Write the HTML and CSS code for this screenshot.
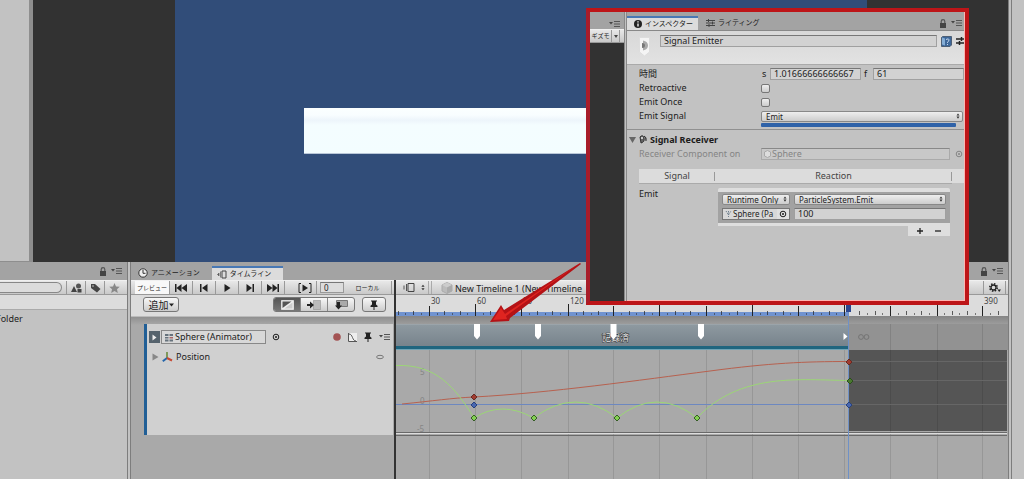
FILE: index.html
```html
<!DOCTYPE html>
<html lang="ja">
<head>
<meta charset="utf-8">
<meta name="viewport" content="width=device-width, initial-scale=1">
<title>Timeline – Signal Emitter</title>
<link rel="stylesheet" href="styles.css">
</head>
<body>
<svg class="defs" aria-hidden="true">
  <defs>
    <symbol id="menu" viewBox="0 0 12 8"><path d="M0 2h4L2 4.500z" fill="#444"/><path d="M5 1.500h6M5 4h6M5 6.500h6" stroke="#555" stroke-width="1"/></symbol>
    <symbol id="lock" viewBox="0 0 8 9"><path d="M1 4h6v5H1z" fill="#444"/><path d="M2.200 4V2.500a1.800 1.800 0 0 1 3.600 0V4" fill="none" stroke="#555" stroke-width="1.200"/></symbol>
    <symbol id="arrows" viewBox="0 0 5 8"><path d="M.5 3.200 2.500.5l2 2.700zM.5 4.800l2 2.700 2-2.700z" fill="#333"/></symbol>
    <symbol id="target" viewBox="0 0 8 8"><circle cx="4" cy="4" r="2.800" fill="none" stroke="currentColor"/><circle cx="4" cy="4" r="1" fill="currentColor"/></symbol>
    <symbol id="pin" viewBox="0 0 8 10"><path d="M1 .5h6v1H6v3l1.500 1.200V7h-3v3h-1V7h-3V5.700L2 4.500v-3H1z" fill="#222"/></symbol>
    <symbol id="diamond" viewBox="-4 -4 8 8"><path d="M-3 0 0-3 3 0 0 3z" fill="inherit" stroke="inherit"/></symbol>
  </defs>
</svg>

<div class="editor">
  <div class="main">
    <div class="top">
      <aside class="hierarchy"></aside>
      <section class="game"><div class="scene"><div class="ground"></div></div></section>
    </div>

    <div class="bottom">
      <aside class="project">
        <div class="tabs tabs-end">
          <svg class="i-lock"><use href="#lock"/></svg>
          <svg class="i-menu"><use href="#menu"/></svg>
        </div>
        <div class="toolbar project-tools">
          <input class="search" type="search" aria-label="Search">
          <button class="tool" aria-label="Filter by type"><svg width="11" height="10" viewBox="0 0 11 10"><circle cx="7.500" cy="3" r="2.500" fill="#555"/><path d="M0 9 3 3l3 6zM6.500 6h4v3.500h-4z" fill="#444"/></svg></button>
          <button class="tool" aria-label="Filter by label"><svg width="11" height="10" viewBox="0 0 11 10"><path d="M1 1h4l5.500 5L7 9.500 1 5z" fill="#444"/><circle cx="3" cy="3" r=".8" fill="#ccc"/></svg></button>
          <button class="tool" aria-label="Favorites"><svg width="11" height="10" viewBox="0 0 11 10"><path d="m5.500 0 1.500 3.400 3.700.4L8 6.300l.8 3.700-3.300-1.900L2.200 10 3 6.300.3 3.800l3.700-.4z" fill="#888"/></svg></button>
        </div>
        <div class="crumbs"></div>
        <div class="files"><span class="file">Folder</span></div>
      </aside>

      <section class="timeline">
        <div class="tabs">
          <button class="tab tab-anim"><svg width="10" height="10" viewBox="0 0 10 10"><circle cx="5" cy="5" r="4.200" fill="#eee" stroke="#333"/><path d="M5 2v3.300h2.500" fill="none" stroke="#333"/></svg>アニメーション</button>
          <button class="tab tab-on"><svg width="10" height="9" viewBox="0 0 10 9"><path d="M5 1h4v7H5z" fill="none" stroke="#444"/><path d="M3.500 1.500v6M.5 4.500 2 3v3z" stroke="#666" fill="#555" stroke-width=".8"/></svg>タイムライン</button>
          <span class="spring"></span>
          <svg class="i-lock"><use href="#lock"/></svg>
          <svg class="i-menu"><use href="#menu"/></svg>
        </div>
        <div class="split">
          <div class="tracks">
            <div class="toolbar transport">
              <button class="tool preview">プレビュー</button>
              <button class="tool" aria-label="Start"><svg width="12" height="8" viewBox="0 0 12 8"><path d="M0 0h1.500v8H0zM6.500 0v8L1.500 4zM12 0v8L6.500 4z" fill="#222"/></svg></button>
              <button class="tool" aria-label="Previous frame"><svg width="8" height="8" viewBox="0 0 8 8"><path d="M0 0h1.500v8H0zM7.500 0v8L2 4z" fill="#222"/></svg></button>
              <button class="tool" aria-label="Play"><svg width="7" height="8" viewBox="0 0 7 8"><path d="M.5 0 6.500 4 .5 8z" fill="#222"/></svg></button>
              <button class="tool" aria-label="Next frame"><svg width="8" height="8" viewBox="0 0 8 8"><path d="M6.500 0H8v8H6.500zM.5 0v8L6 4z" fill="#222"/></svg></button>
              <button class="tool" aria-label="End"><svg width="12" height="8" viewBox="0 0 12 8"><path d="M10.500 0H12v8h-1.500zM5.500 0v8l5-4zM0 0v8l5.500-4z" fill="#222"/></svg></button>
              <button class="tool range" aria-label="Play range"><svg width="14" height="10" viewBox="0 0 14 10"><path d="M3 .5H1v9h2M11 .5h2v9h-2" fill="none" stroke="#222"/><path d="M4.500 1.500 10 5 4.500 8.500z" fill="#222"/></svg></button>
              <input class="frame" value="0" aria-label="Frame">
              <button class="tool local">ローカル</button>
            </div>
            <div class="modes">
              <button class="btn add">追加<svg width="5" height="4" viewBox="0 0 5 4"><path d="M0 .5h5L2.500 3.500z" fill="#222"/></svg></button>
              <span class="spring"></span>
              <div class="segments">
                <button class="seg seg-on" aria-label="Mix mode"><svg width="13" height="10" viewBox="0 0 13 10"><path d="M.5.500h12v9H.5z" fill="#eee" stroke="#ddd"/><path d="M1.500 8V1.500h9z" fill="#555"/><path d="M11.500 2.500v6h-8z" fill="#ccc"/></svg></button>
                <button class="seg" aria-label="Ripple mode"><svg width="14" height="10" viewBox="0 0 14 10"><path d="M6.500.500h7v9h-7z" fill="#bbb" stroke="#888" stroke-dasharray="1 1"/><path d="M0 4h3V1.500L7 5 3 8.500V6H0z" fill="#222"/></svg></button>
                <button class="seg" aria-label="Replace mode"><svg width="14" height="10" viewBox="0 0 14 10"><path d="M2.500.500h11v6h-11z" fill="#aaa" stroke="#777"/><path d="M3 2h3v3.500h2L4.500 9.500 1 5.500h2z" fill="#222"/></svg></button>
              </div>
              <button class="btn pin" aria-label="Show markers"><svg width="8" height="10"><use href="#pin"/></svg></button>
            </div>
            <div class="track-list">
              <article class="track">
                <div class="track-row">
                  <button class="expand" aria-label="Expand"><svg width="5" height="7" viewBox="0 0 5 7"><path d="M.5.500 4.500 3.500l-4 3z" fill="#eee"/></svg></button>
                  <div class="binding">
                    <svg width="8" height="9" viewBox="0 0 8 9"><path d="M0 1h3.500v2H0zM4.500 1H8v2H4.500zM0 4h3.500v1.500H0zM0 6.500h3.500v2H0zM4.500 6.500H8v2H4.500z" fill="#66727c"/><path d="M4.500 4H8v1.500H4.500z" fill="#a66"/></svg>
                    <input value="Sphere (Animator)" aria-label="Binding">
                  </div>
                  <button class="plain" aria-label="Pick object"><svg width="8" height="8"><use href="#target"/></svg></button>
                  <span class="spring"></span>
                  <button class="plain" aria-label="Record"><svg width="8" height="8" viewBox="0 0 8 8"><circle cx="4" cy="4" r="3.800" fill="#a35353"/></svg></button>
                  <button class="plain" aria-label="Curves"><svg width="9" height="9" viewBox="0 0 9 9"><path d="M0 0h9v9H0z" fill="#eee"/><path d="M.5 0v8.500H9M1 1c4 0 3 7 7 7" fill="none" stroke="#555"/></svg></button>
                  <button class="plain" aria-label="Markers"><svg width="8" height="10"><use href="#pin"/></svg></button>
                  <button class="plain" aria-label="Track menu"><svg width="12" height="8"><use href="#menu"/></svg></button>
                </div>
                <div class="prop-row">
                  <svg width="7" height="8" viewBox="0 0 7 8"><path d="M.5.500 6.500 4l-6 3.500z" fill="#888"/></svg>
                  <svg width="11" height="10" viewBox="0 0 11 10"><path d="M5 0v6" stroke="#698a3c" stroke-width="1.600"/><path d="M5 6 .8 9.200" stroke="#2767ab" stroke-width="2"/><path d="m5 6 5 2.500" stroke="#c64832" stroke-width="2"/></svg>
                  <span>Position</span>
                  <span class="spring"></span>
                  <svg width="8" height="6" viewBox="0 0 8 6"><ellipse cx="4" cy="3" rx="3.400" ry="1.700" fill="none" stroke="#777"/></svg>
                </div>
              </article>
            </div>
          </div>

          <div class="clips">
            <div class="toolbar asset-bar">
              <button class="tool sequence" aria-label="Timeline selector"><svg width="12" height="9" viewBox="0 0 12 9"><path d="M5 .5h6v8H5z" fill="none" stroke="#444"/><path d="M3.500 1v7M1 2.500v4" stroke="#555"/></svg><svg width="4" height="7"><use href="#arrows"/></svg></button>
              <svg class="cube" width="12" height="12" viewBox="0 0 12 12"><path d="m6 .5 5 2.500v6l-5 2.500L1 9V3z" fill="#bbb" stroke="#aaa"/><path d="m1 3 5 2.500L11 3 6 .5z" fill="#ccc"/><path d="M6 5.500v6L11 9V3z" fill="#aaa"/></svg>
              <span class="asset-name">New Timeline 1 (New Timeline</span>
              <span class="spring"></span>
              <button class="tool gear" aria-label="Settings"><svg width="12" height="10" viewBox="0 0 12 10"><circle cx="4.500" cy="4.500" r="3.700" fill="none" stroke="#222" stroke-width="1.600" stroke-dasharray="1.500 1.400"/><circle cx="4.500" cy="4.500" r="2.500" fill="none" stroke="#222" stroke-width="1.300"/><path d="M8.500 6.500H12L10.200 9z" fill="#222"/></svg></button>
            </div>
            <svg class="canvas" role="img" aria-label="Timeline curves">
              <defs>
                <linearGradient id="clip" x2="0" y2="1"><stop stop-color="#8f9aa1"/><stop offset="1" stop-color="#75818a"/></linearGradient>
                <linearGradient id="shade" x2="0" y2="1"><stop stop-color="#858585"/><stop offset="1" stop-color="#9c9c9c"/></linearGradient>
                <g id="marker"><path d="M-3 0h6v12L0 15.500-3 12z" fill="#fff"/></g>
              </defs>
              <g transform="translate(-396 -295)">
                <rect x="396" y="295" width="100%" height="21" fill="#dcdcdc"/>
                <rect x="396" y="312" width="452" height="4" fill="#7093d0"/>
                <path d="M429.500 306v10M475.500 304v12M521.500 306v10M568.500 304v12M613.500 306v10M659.500 304v12M706.500 306v10M752.500 304v12M798.500 306v10M844.500 304v12M890.500 306v10M937.500 304v12M982.500 306v10" stroke="#222"/>
                <path d="M398.500 311v4M413.500 311v4M444.500 311v4M460.500 311v4M490.500 311v4M506.500 311v4M537.500 311v4M552.500 311v4M583.500 311v4M598.500 311v4M629.500 311v4M644.500 311v4M675.500 311v4M690.500 311v4M721.500 311v4M737.500 311v4M767.500 311v4M783.500 311v4M813.500 311v4M829.500 311v4M859.500 311v4M875.500 311v4M906.500 311v4M921.500 311v4M952.500 311v4M967.500 311v4M998.500 311v4" stroke="#222" opacity=".7"/>
                <path d="M405.500 313v2M421.500 313v2M437.500 313v2M452.500 313v2M467.500 313v2M483.500 313v2M498.500 313v2M514.500 313v2M529.500 313v2M545.500 313v2M560.500 313v2M576.500 313v2M591.500 313v2M606.500 313v2M621.500 313v2M636.500 313v2M652.500 313v2M667.500 313v2M683.500 313v2M698.500 313v2M714.500 313v2M729.500 313v2M744.500 313v2M760.500 313v2M775.500 313v2M790.500 313v2M806.500 313v2M821.500 313v2M836.500 313v2M867.500 313v2M882.500 313v2M898.500 313v2M914.500 313v2M929.500 313v2M944.500 313v2M959.500 313v2M975.500 313v2M990.500 313v2" stroke="#333" opacity=".6"/>
                <g class="ruler-text"><text x="431" y="304">30</text><text x="477" y="304">60</text><text x="523" y="304">90</text><text x="570" y="304">120</text><text x="984" y="304">390</text></g>
                <rect x="396" y="316" width="100%" height="8" fill="url(#shade)"/>
                <rect x="396" y="324" width="100%" height="26" fill="#929292"/>
                <rect x="396" y="324" width="452" height="24" fill="url(#clip)"/>
                <path d="M396 324.500h452" stroke="#9ba4aa"/>
                <rect x="396" y="346" width="452" height="3" fill="#1f657f"/>
                <rect x="396" y="350" width="100%" height="81" fill="#a9a9a9"/>
                <rect x="849" y="350" width="158" height="81" fill="#555"/>
                <rect x="396" y="431" width="100%" height="500" fill="#a9a9a9"/>
                <path d="M429.500 350v2000M475.500 350v2000M521.500 350v2000M568.500 350v2000M613.500 350v2000M659.500 350v2000M706.500 350v2000M752.500 350v2000M798.500 350v2000M844.500 350v2000M890.500 324v2000M937.500 324v2000M982.500 324v2000" stroke="#000" opacity=".1"/>
                <path d="M849 361.500h158M849 380.500h158M849 404.500h158" stroke="#666"/>
                <path d="M396 349.500h452" stroke="#6fa3b5"/>
                <path d="M396 433.500h611" stroke="#ddd"/>
                <path d="M396 432.500h611M396 435.500h611" stroke="#696969"/>
                <use href="#marker" x="477" y="324"/><use href="#marker" x="538" y="324"/><use href="#marker" x="701" y="324"/>
                <text class="clip-name" x="602" y="341">記録済</text>
                <use href="#marker" x="613.500" y="324"/>
                <path d="m843.500 333 4 3.500-4 3.500z" fill="#fff"/>
                <g fill="none" stroke="#747474"><circle cx="861" cy="337" r="2.400"/><circle cx="866.500" cy="337" r="2.400"/></g>
                <g class="axis-text"><text x="420" y="375">5</text><text x="420" y="404">0</text><text x="417" y="432">-5</text></g>
                <path d="M396 404.500h452" stroke="#6d88c0"/>
                <path d="M402 404C433 401 452 398 474 397C550 393 640 380 710 371C770 363 805 361.500 848 361.500" fill="none" stroke="#b7614f"/>
                <path d="M396 365.500C436 364 455 387 474 418Q502 400 533.500 418Q576 386 617 418Q657 386 697 418C740 372 800 380 849 380.500" fill="none" stroke="#9cd676"/>
                <path d="M848.500 306v2000" stroke="#6f91c6"/>
                <rect x="846" y="304" width="5" height="8" fill="#2c478f"/>
                <g fill="#a13c30" stroke="#672a23"><use href="#diamond" x="470" y="393" width="8" height="8"/><use href="#diamond" x="845" y="358" width="8" height="8"/></g>
                <g fill="#4a68b0" stroke="#27417e"><use href="#diamond" x="470" y="401" width="8" height="8"/><use href="#diamond" x="845" y="401" width="8" height="8"/></g>
                <g fill="#83d052" stroke="#355d24"><use href="#diamond" x="470" y="414" width="8" height="8"/><use href="#diamond" x="530" y="414" width="8" height="8"/><use href="#diamond" x="613" y="414" width="8" height="8"/><use href="#diamond" x="693" y="414" width="8" height="8"/></g>
                <g fill="#4a7a30" stroke="#2c4d1d"><use href="#diamond" x="846" y="377" width="8" height="8"/></g>
              </g>
            </svg>
          </div>
        </div>
      </section>
    </div>
  </div>
  <aside class="dock"></aside>

  <svg class="callout-arrow" width="96" height="64" viewBox="0 0 96 64" aria-hidden="true"><path d="M91 3 20 57l-1 3-19 1L11 44l3 5L90 2z" fill="#b41216"/><path d="M90 2 15 53l-4-6L3 59l14-1-1-3z" fill="#df2420"/></svg>

  <section class="callout">
    <div class="peek">
      <div class="tabs tabs-end"><svg class="i-menu"><use href="#menu"/></svg></div>
      <div class="toolbar peek-tools"><button class="tool gizmo">ギズモ</button><button class="tool gizmo-more" aria-label="Gizmo menu"><svg width="4" height="3" viewBox="0 0 4 3"><path d="M0 0h4L2 3z" fill="#444"/></svg></button></div>
      <div class="peek-view"></div>
    </div>
    <div class="inspector">
      <div class="tabs">
        <button class="tab tab-on"><svg width="8" height="8" viewBox="0 0 8 8"><circle cx="4" cy="4" r="4" fill="#222"/><path d="M4 1.200v1.300M4 3.500V6.500" stroke="#fff" stroke-width="1.300"/></svg>インスペクター</button>
        <button class="tab"><svg width="9" height="8" viewBox="0 0 9 8"><path d="M0 1.500h9M0 4h9M0 6.500h9M2.500 0v3M6.500 2.500v3M3 5v3" stroke="#444"/></svg>ライティング</button>
        <span class="spring"></span>
        <svg class="i-lock"><use href="#lock"/></svg>
        <svg class="i-menu"><use href="#menu"/></svg>
      </div>
      <header class="insp-head">
        <svg class="emitter" width="11" height="20" viewBox="0 0 11 20"><path d="M.5.500h10V15l-5 4-5-4z" fill="#f4f4f4" stroke="#ddd"/><path d="M4 3.500q5 1 5 5t-5 5z" fill="#aaa"/><path d="M3 6q3 0 3 2.500T3 11z" fill="#777"/></svg>
        <input class="field name" value="Signal Emitter" aria-label="Name">
        <button class="plain" aria-label="Help"><svg width="11" height="11" viewBox="0 0 11 11"><path d="M1.500.500h9v8.500l-1.500 1.500H.5V1.500z" fill="#3d6799" stroke="#4d5f75"/><path d="m1 1.500 3 1v7l-3-1z" fill="#84add6"/><path d="M5 3.500q3-1.500 3 .3T6.500 6v.8M6.500 8v1" fill="none" stroke="#c5d8f0"/></svg></button>
        <button class="plain" aria-label="Presets"><svg width="8" height="10" viewBox="0 0 8 10"><path d="M0 3h8M0 7h8M5.500 1v4M3.500 5v4" stroke="#222" stroke-width="1.500"/></svg></button>
      </header>
      <div class="props">
        <div class="prop time"><label for="sec">時間</label><span class="unit">s</span><input class="field" id="sec" value="1.01666666666667"><label class="unit" for="frm">f</label><input class="field" id="frm" value="61"></div>
        <div class="prop"><label for="retro">Retroactive</label><input type="checkbox" id="retro"></div>
        <div class="prop"><label for="once">Emit Once</label><input type="checkbox" id="once"></div>
        <div class="prop"><label for="sig">Emit Signal</label><div class="dropdown"><select id="sig"><option>Emit</option></select><svg width="4" height="6"><use href="#arrows"/></svg></div></div>
        <div class="signal-color"></div>
      </div>
      <div class="receiver">
        <h2><svg width="7" height="6" viewBox="0 0 7 6"><path d="M0 0h7L3.500 6z" fill="#666"/></svg><svg width="8" height="10" viewBox="0 0 8 10"><path d="M1 2q3-3 4 1t-3 5zM5 1q3 1 2 5" fill="#666" stroke="#333"/><circle cx="3" cy="3" r="1" fill="#eee"/></svg>Signal Receiver</h2>
        <div class="prop muted"><label for="comp">Receiver Component on</label><div class="object"><svg width="7" height="8" viewBox="0 0 7 8"><path d="m3.500.500 3 1.500v4l-3 1.500-3-1.500V2z" fill="#ddd" stroke="#aaa"/></svg><input id="comp" value="Sphere" disabled></div><svg width="8" height="8"><use href="#target"/></svg></div>
        <table class="reactions">
          <colgroup><col class="col-signal"><col><col class="col-end"></colgroup>
          <thead><tr><th>Signal</th><th>Reaction</th><td></td></tr></thead>
          <tbody><tr><td class="signal">Emit</td><td>
            <div class="event">
              <div class="event-grid">
                <div class="dropdown"><select aria-label="Call state"><option>Runtime Only</option></select><svg width="4" height="6"><use href="#arrows"/></svg></div>
                <div class="dropdown"><select aria-label="Function"><option>ParticleSystem.Emit</option></select><svg width="4" height="6"><use href="#arrows"/></svg></div>
                <div class="object listener"><svg width="7" height="8" viewBox="0 0 7 8"><path d="m1 1 2.500 4L6 1M3.500 1v6" fill="none" stroke="#6e7f8e" stroke-dasharray="1.500 1"/></svg><input value="Sphere (Pa" aria-label="Listener"><button aria-label="Pick listener"><svg width="8" height="8"><use href="#target"/></svg></button></div>
                <input class="field" value="100" aria-label="Argument">
              </div>
            </div>
            <div class="event-foot"><button aria-label="Add"><svg width="6" height="6" viewBox="0 0 6 6"><path d="M0 3h6M3 0v6" stroke="#222" stroke-width="1.300"/></svg></button><button aria-label="Remove"><svg width="6" height="6" viewBox="0 0 6 6"><path d="M0 3h6" stroke="#222" stroke-width="1.300"/></svg></button></div>
          </td><td></td></tr></tbody>
        </table>
      </div>
    </div>
  </section>
</div>
</body>
</html>
```
FILE: styles.css
```css
* { box-sizing: border-box; }
body { margin: 0; font: 9px/12px "Noto Sans", "Noto Sans CJK JP", sans-serif; color: #1c1c1c; background: #a3a3a3; }
button, input, select { font: inherit; color: inherit; margin: 0; padding: 0; border: 0; border-radius: 0; background: none; min-width: 0; appearance: none; outline: none; }
button { white-space: nowrap; }
svg { flex: none; display: block; }
.defs { position: absolute; width: 0; height: 0; }
.spring { flex: 1; }

.editor { position: relative; display: flex; min-height: 100vh; overflow: hidden; }
.main { flex: 1; min-width: 0; display: flex; flex-direction: column; }
.dock { width: 16px; background: #c2c2c2; border-left: 4px double #7d7d7d; }

.top { display: flex; height: 262px; }
.hierarchy { width: 33px; background: #c2c2c2; border-right: 4px solid #8e8e8e; border-bottom: 1px solid #8e8e8e; }
.game { flex: 1; padding: 0 141px 0 142px; background: #323232; }
.scene { height: 100%; padding: 108px 129px; background: #314d79; }
.ground { height: 46px; border-bottom: 1px solid #b9c7d8; background: linear-gradient(#fbffff 0, #f8fdff 16%, #edf5fb 27%, #f4fdff 38%, #f3fdff 100%); }

.bottom { flex: 1; display: flex; }
.tabs { display: flex; align-items: center; height: 18px; padding-right: 4px; background: #a3a3a3; }
.tabs-end { justify-content: flex-end; }
.tab { display: flex; align-items: center; gap: 3px; height: 14px; padding: 0 6px; margin-top: 4px; font-size: 7px; }
.tab-on { background: #dcdcdc; border-top: 2px solid #4878b4; padding: 0 12px 0 5px; }
.i-lock { width: 8px; height: 9px; margin-right: 4px; }
.i-menu { width: 12px; height: 8px; }
.toolbar { display: flex; height: 15px; border-top: 1px solid #f0f0f0; border-bottom: 1px solid #999; background: linear-gradient(#e8e8e8, #c9c9c9); }
.tool { display: flex; align-items: center; justify-content: center; width: 23px; border-right: 1px solid #999; }
.plain { display: flex; align-items: center; }
.field { height: 12px; padding: 0 3px; background: #d2d2d2; border: 1px solid #a0a0a0; border-top-color: #777; }

.project { width: 131px; display: flex; flex-direction: column; border-right: 4px double #7d7d7d; background: #c2c2c2; }
.project-tools { padding-right: 4px; }
.search { flex: 1; margin: 1px 4px 1px 0; border: 1px solid #888; border-left: 0; border-radius: 0 6px 6px 0; background: #dcdcdc; }
.project-tools .tool { border-right: 0; border-left: 1px solid #999; width: 19px; }
.crumbs { height: 15px; background: #dcdcdc; border-bottom: 1px solid #aaa; }
.files { padding-top: 3px; }
.file { margin-left: -4px; }

.timeline { flex: 1; min-width: 0; display: flex; flex-direction: column; background: #a9a9a9; }
.tab-anim { padding: 0 12px 0 7px; }
.split { flex: 1; display: flex; }
.tracks { width: 265px; border-right: 2px solid #333; display: flex; flex-direction: column; }
.transport { padding-left: 4px; }
.preview { width: 35px; background: #f8f8f8; font-size: 6px; }
.range { width: 32px; padding-left: 8px; }
.frame { width: 24px; height: 11px; margin: 1px 0 0 3px; padding: 0 3px; background: #dcdcdc; border: 1px solid #999; border-top-color: #777; font-size: 8px; }
.local { flex: 1; margin-right: 2px; font-size: 6px; }
.modes { display: flex; align-items: center; gap: 7px; height: 22px; padding: 0 8px 2px 12px; background: #dcdcdc; border-bottom: 1px solid #bbb; }
.btn, .segments { border: 1px solid #777; border-radius: 3px; background: linear-gradient(#f8f8f8, #ccc); height: 15px; }
.btn { display: flex; align-items: center; justify-content: center; }
.add { width: 36px; font-size: 10px; }
.pin { width: 24px; }
.segments { display: flex; width: 82px; overflow: hidden; }
.seg { flex: 1; display: flex; align-items: center; justify-content: center; border-left: 1px solid #888; }
.seg-on { background: linear-gradient(#555, #777); border-left: 0; }
.track-list { flex: 1; padding: 7px 1px 0 13px; background: linear-gradient(#909090, #a9a9a9 8px); }
.track { min-height: 111px; border-left: 3px solid #215f96; background: #d0d0d0; padding: 6px 2px 0 2px; }
.track-row { display: flex; align-items: center; gap: 6px; height: 14px; }
.track-row .plain + .plain { margin-left: 1px; }
.expand { display: flex; align-items: center; justify-content: center; width: 11px; height: 12px; background: #56636d; margin-right: -5px; }
.binding { display: flex; align-items: center; gap: 2px; width: 105px; height: 14px; padding-left: 3px; background: #d8d8d8; border: 1px solid #888; }
.binding input { flex: 1; }
.prop-row { display: flex; align-items: center; gap: 3px; height: 14px; margin-top: 6px; padding: 0 7px 0 3px; }

.clips { flex: 1; min-width: 0; display: flex; flex-direction: column; }
.asset-bar { align-items: stretch; padding-right: 2px; }
.sequence { width: 36px; gap: 6px; padding-left: 4px; border-right: 4px double #aaa; }
.cube { margin: 1px 2px 0 9px; align-self: center; }
.asset-name { line-height: 15px; white-space: nowrap; }
.gear { width: 23px; border-left: 1px solid #999; }
.canvas { flex: 1; width: 100%; overflow: hidden; }
.ruler-text { font-size: 8px; fill: #444; }
.axis-text { font-size: 8px; fill: #858585; }
.clip-name { font-size: 9px; fill: #e8e8e8; stroke: #333; stroke-width: 1px; paint-order: stroke; }

.callout-arrow { position: absolute; left: 490px; top: 261px; }
.callout { position: absolute; left: 586px; top: 8px; width: 383px; height: 297px; display: flex; border: 4px solid #bd1518; border-left-color: #a81d2a; background: #c2c2c2; box-shadow: inset -1px -1px #ffb4b0; overflow: hidden; }
.peek { width: 34px; display: flex; flex-direction: column; }
.peek .tabs { padding-right: 3px; height: 17px; padding-top: 6px; }
.peek-tools { height: 14px; }
.gizmo { width: 22px; font-size: 6px; }
.gizmo-more { width: 8px; }
.peek-view { flex: 1; background: #323232; }
.inspector { flex: 1; min-width: 0; border-left: 3px double #888; margin-right: 1px; }
.inspector .tabs { height: 19px; padding: 4px 1px 0 0; border-bottom: 1px solid #888; }
.inspector .tab { margin-top: 0; padding: 0 8px; }
.inspector .tab-on { padding: 0 5px 0 7px; }
.insp-head { display: flex; gap: 4px; align-items: flex-start; height: 34px; padding: 4px 0 0 12px; background: linear-gradient(#d8d8d8, #e2e2e2); border-bottom: 1px solid #aaa; }
.emitter { margin: 2px 6px 0 0; }
.name { flex: 1; }
.insp-head .plain { height: 12px; }
.props { padding: 2px 0 2px 12px; border-bottom: 1px solid #909090; }
.prop { display: grid; grid-template-columns: 122px 1fr; align-items: center; height: 14px; padding-right: 1px; }
.prop > * { min-width: 0; }
.prop.time { grid-template-columns: 122px 9px 91px 12px 1fr; padding-right: 0; }
.unit { padding-left: 1px; }
.time label.unit { padding-left: 3px; }
input[type="checkbox"] { width: 9px; height: 9px; border: 1px solid #777; border-radius: 2px; background: linear-gradient(#eee, #ccc); }
.dropdown { position: relative; display: flex; align-items: center; font-size: 8px; }
.dropdown select { flex: 1; width: 100%; height: 11px; line-height: 9px; padding: 0 4px; border: 1px solid #888; border-radius: 2px; background: linear-gradient(#eee, #ccc); }
.dropdown svg { position: absolute; right: 3px; pointer-events: none; }
.signal-color { height: 4px; margin: 0 8px 0 122px; background: #2f62a8; border-radius: 1px; }
.receiver { padding: 4px 0 0 12px; }
h2 { display: flex; align-items: center; gap: 3px; height: 12px; margin: 0 0 1px -10px; font-size: 9px; line-height: 12px; }
.prop.muted { grid-template-columns: 122px 1fr 8px; column-gap: 0; color: #858585; }
.object { display: flex; align-items: center; gap: 1px; height: 12px; padding-left: 2px; border: 1px solid #aaa; border-top-color: #888; background: #c8c8c8; }
.object input { flex: 1; }
.muted .object { margin-right: 5px; }
.reactions { width: 100%; margin-top: 8px; border-collapse: collapse; table-layout: fixed; }
.col-signal { width: 76px; }
.col-end { width: 12px; }
.reactions thead { background: #dcdcdc; color: #444; }
.reactions th { position: relative; height: 14px; padding: 0; font-weight: 400; border-bottom: 1px solid #aaa; }
.reactions th::after { content: ""; position: absolute; right: 0; top: 3px; bottom: 2px; border-right: 1px solid #999; }
.reactions td { padding: 0; vertical-align: top; }
.reactions .signal { padding-top: 4px; }
.event { margin: 4px 2px 0 3px; padding: 1px 4px; background: #a2a2a2; border-top: 4px solid #dedede; border-bottom: 3px solid #dedede; border-radius: 2px 2px 0 0; }
.event-grid { display: grid; grid-template-columns: 68px 1fr; gap: 3px 4px; padding: 1px 0 2px; }
.listener { background: #d8d8d8; border-color: #777; font-size: 8px; }
.listener button { width: 12px; height: 10px; display: flex; align-items: center; justify-content: center; background: #e0e0e0; }
.event-foot { display: flex; justify-content: space-evenly; width: 42px; height: 10px; margin: 0 2px 0 auto; background: #dedede; }
.event-foot button { width: 12px; display: flex; align-items: center; justify-content: center; }
```
